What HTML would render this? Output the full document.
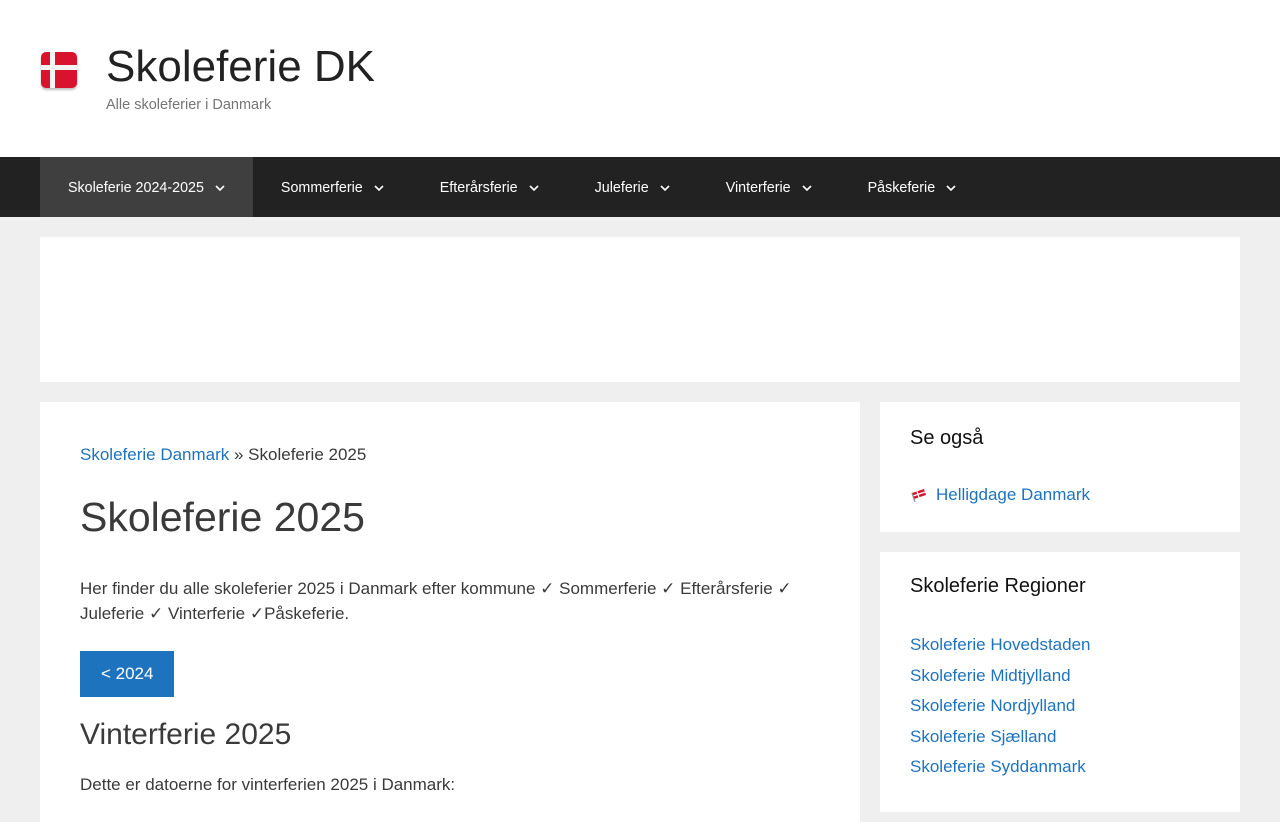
<!DOCTYPE html>
<html><head><meta charset="utf-8"><style>
*{box-sizing:border-box;margin:0;padding:0}
body{width:1280px;height:800px;overflow:hidden;background:#efefef;font-family:"Liberation Sans",sans-serif;color:#3a3a3a}
.hdr{background:#fff;height:157px;position:relative}
.logo{position:absolute;left:41px;top:52px;width:36px;height:36px;border-radius:5px;background:#d9122e;box-shadow:0 2px 2px rgba(0,0,0,.25)}
.logo:before{content:"";position:absolute;left:9px;top:0;width:5px;height:36px;background:#f3f3f3}
.logo:after{content:"";position:absolute;left:0;top:13px;width:36px;height:5px;background:#f3f3f3}
.title{position:absolute;left:106px;top:42px;font-size:44px;color:#222}
.tag{position:absolute;left:106px;top:97px;font-size:14.5px;color:#757575}
nav{background:#222;height:60px;display:flex;padding-left:40px}
nav a{color:#fff;font-size:14.3px;line-height:60px;padding:1px 28px 0;text-decoration:none;display:flex;align-items:center}
nav a.act{background:#3f3f3f}
nav a svg{margin-left:11px}
.ad{position:absolute;left:40px;top:237px;width:1200px;height:145px;background:#fff}
.main{position:absolute;left:40px;top:402px;width:820px;height:420px;background:#fff;padding:42px 40px}
a.l{color:#1e73be;text-decoration:none}
.bc{font-size:17px;margin-top:1px}
h1{font-weight:400;font-size:41px;margin-top:29px;color:#3a3a3a}
p{font-size:17px;line-height:25px}
.btn{display:inline-block;background:#1e73be;color:#fff;font-size:17px;padding:13px 21px;margin-top:25px}
h2{font-weight:400;font-size:30px;margin-top:21px}
.side{position:absolute;left:880px;width:360px;background:#fff;padding:0 30px}
.side h3{font-weight:400;font-size:20px;color:#111}
.side a{display:block;font-size:17px}
</style></head><body>
<div class="hdr"><div class="logo"></div><div class="title">Skoleferie DK</div><div class="tag">Alle skoleferier i Danmark</div></div>
<nav>
<a class="act">Skoleferie 2024-2025<svg width="10" height="6" viewBox="0 0 10 6"><path d="M1 1l4 4 4-4" stroke="#fff" stroke-width="1.6" fill="none"/></svg></a>
<a>Sommerferie<svg width="10" height="6" viewBox="0 0 10 6"><path d="M1 1l4 4 4-4" stroke="#fff" stroke-width="1.6" fill="none"/></svg></a>
<a>Efterårsferie<svg width="10" height="6" viewBox="0 0 10 6"><path d="M1 1l4 4 4-4" stroke="#fff" stroke-width="1.6" fill="none"/></svg></a>
<a>Juleferie<svg width="10" height="6" viewBox="0 0 10 6"><path d="M1 1l4 4 4-4" stroke="#fff" stroke-width="1.6" fill="none"/></svg></a>
<a>Vinterferie<svg width="10" height="6" viewBox="0 0 10 6"><path d="M1 1l4 4 4-4" stroke="#fff" stroke-width="1.6" fill="none"/></svg></a>
<a>Påskeferie<svg width="10" height="6" viewBox="0 0 10 6"><path d="M1 1l4 4 4-4" stroke="#fff" stroke-width="1.6" fill="none"/></svg></a>
</nav>
<div class="ad"></div>
<div class="main">
<div class="bc"><a class="l">Skoleferie Danmark</a> » Skoleferie 2025</div>
<h1>Skoleferie 2025</h1>
<p style="margin-top:35px">Her finder du alle skoleferier 2025 i Danmark efter kommune ✓ Sommerferie ✓ Efterårsferie ✓ Juleferie ✓ Vinterferie ✓Påskeferie.</p>
<a class="btn">&lt; 2024</a>
<h2>Vinterferie 2025</h2>
<p style="margin-top:20px">Dette er datoerne for vinterferien 2025 i Danmark:</p>
</div>
<div class="side" style="top:402px;height:130px;padding-top:25px">
<h3>Se også</h3>
<div style="margin-top:35px;display:flex;align-items:center"><svg width="18" height="14" viewBox="0 0 18 14" style="margin-right:8px"><path d="M2 5l12-4 2 6-12 4z" fill="#d9122e"/><path d="M7 3.5l2 6M3 8l12-4" stroke="#fff" stroke-width="1.2"/><path d="M2 5l3 9" stroke="#888" stroke-width="1.2"/></svg><a class="l" style="display:inline">Helligdage Danmark</a></div>
</div>
<div class="side" style="top:552px;height:260px;padding-top:23px">
<h3>Skoleferie Regioner</h3>
<div style="margin-top:32px;line-height:30.5px">
<a class="l">Skoleferie Hovedstaden</a><a class="l">Skoleferie Midtjylland</a><a class="l">Skoleferie Nordjylland</a><a class="l">Skoleferie Sjælland</a><a class="l">Skoleferie Syddanmark</a>
</div></div>
</body></html>
